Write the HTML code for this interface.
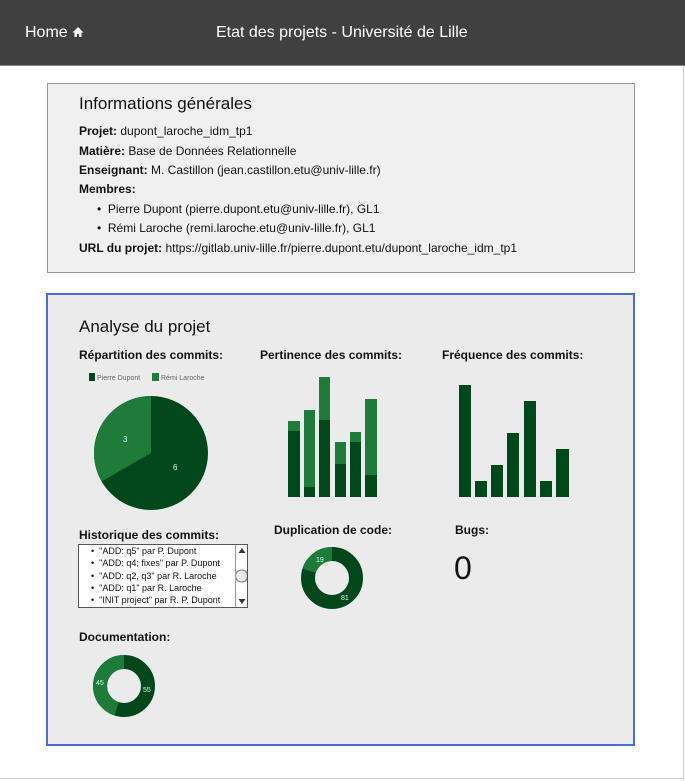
<!DOCTYPE html>
<html><head><meta charset="utf-8"><style>
*{margin:0;padding:0;box-sizing:border-box}
body{width:685px;height:781px;background:#fff;font-family:"Liberation Sans",Arial,sans-serif;position:relative;overflow:hidden;color:#111}
.a{position:absolute;white-space:nowrap}
.hdr{left:0;top:0;width:685px;height:66px;background:#404040;border-bottom:1px solid #888}
.t{font-size:12px}
b{font-weight:bold}
h4{font-size:12px;font-weight:bold;position:absolute;white-space:nowrap}
</style></head><body>
<div class="a" style="left:0;top:0;width:684px;height:779px;border-right:1px solid #ccc;border-bottom:1px solid #ccc"></div>
<div class="a hdr"></div>
<div class="a" style="left:25px;top:24px;color:#fff;font-size:16px">Home <svg width="12" height="12" viewBox="0 0 12 12" style="vertical-align:-1px"><path d="M6 1L0.5 6.5H2.5V11H5V8H7V11H9.5V6.5H11.5Z" fill="#fff"/></svg></div>
<div class="a" style="left:216px;top:24px;color:#fff;font-size:16px">Etat des projets - Université de Lille</div>

<div class="a" style="left:47px;top:83px;width:588px;height:190px;background:#f0f0f0;border:1px solid #999"></div>
<div class="a" style="left:79px;top:94px;font-size:17px">Informations générales</div>
<div class="a t" style="left:79px;top:124px"><b>Projet:</b> dupont_laroche_idm_tp1</div>
<div class="a t" style="left:79px;top:144px"><b>Matière:</b> Base de Données Relationnelle</div>
<div class="a t" style="left:79px;top:163px"><b>Enseignant:</b> M. Castillon (jean.castillon.etu@univ-lille.fr)</div>
<div class="a t" style="left:79px;top:182px"><b>Membres:</b></div>
<div class="a t" style="left:97px;top:202px">•&nbsp; Pierre Dupont (pierre.dupont.etu@univ-lille.fr), GL1</div>
<div class="a t" style="left:97px;top:221px">•&nbsp; Rémi Laroche (remi.laroche.etu@univ-lille.fr), GL1</div>
<div class="a t" style="left:79px;top:241px"><b>URL du projet:</b> https://gitlab.univ-lille.fr/pierre.dupont.etu/dupont_laroche_idm_tp1</div>

<div class="a" style="left:46px;top:293px;width:589px;height:453px;background:#ebebeb;border:2px solid #4a6fd4"></div>
<div class="a" style="left:79px;top:317px;font-size:17px">Analyse du projet</div>
<h4 style="left:79px;top:348px">Répartition des commits:</h4>
<h4 style="left:260px;top:348px">Pertinence des commits:</h4>
<h4 style="left:442px;top:348px">Fréquence des commits:</h4>
<h4 style="left:79px;top:528px">Historique des commits:</h4>
<h4 style="left:274px;top:523px">Duplication de code:</h4>
<h4 style="left:455px;top:523px">Bugs:</h4>
<h4 style="left:79px;top:630px">Documentation:</h4>
<div class="a" style="left:454px;top:550px;font-size:32px">0</div>

<svg class="a" style="left:0;top:0" width="685" height="781">
<g font-family="Liberation Sans,Arial,sans-serif" font-size="7" fill="#666">
<rect x="89" y="373" width="6" height="8" fill="#00481b"/><text x="97" y="380">Pierre Dupont</text>
<rect x="152" y="373" width="7" height="8" fill="#1e7b3a"/><text x="161" y="380">Rémi Laroche</text>
</g>
<circle cx="151" cy="453" r="57" fill="#00481b"/>
<path d="M151 453L151 396A57 57 0 0 0 101.6 481.5Z" fill="#1e7b3a"/>
<text x="123" y="442" font-size="8" fill="#cfe" font-family="Liberation Sans,Arial">3</text>
<text x="173" y="470" font-size="8" fill="#cfe" font-family="Liberation Sans,Arial">6</text>
<g fill="#1e7b3a">
<rect x="288" y="421" width="12" height="76"/><rect x="304" y="410" width="11" height="87"/><rect x="319" y="377" width="11" height="120"/><rect x="335" y="442" width="11" height="55"/><rect x="350" y="432" width="11" height="65"/><rect x="365" y="399" width="12" height="98"/>
</g>
<g fill="#00481b">
<rect x="288" y="431" width="12" height="66"/><rect x="304" y="487" width="11" height="10"/><rect x="319" y="420" width="11" height="77"/><rect x="335" y="464" width="11" height="33"/><rect x="350" y="442" width="11" height="55"/><rect x="365" y="475" width="12" height="22"/>
<rect x="459" y="385" width="12" height="112"/><rect x="475" y="481" width="12" height="16"/><rect x="491" y="465" width="12" height="32"/><rect x="507" y="433" width="12" height="64"/><rect x="524" y="401" width="12" height="96"/><rect x="540" y="481" width="12" height="16"/><rect x="556" y="449" width="13" height="48"/>
</g>
<circle cx="332" cy="578" r="24" fill="none" stroke="#00481b" stroke-width="14"/>
<path d="M332 554A24 24 0 0 0 309.2 570.6" fill="none" stroke="#1e7b3a" stroke-width="14"/>
<text x="316" y="562" font-size="7" fill="#cfe" font-family="Liberation Sans,Arial">19</text>
<text x="341" y="600" font-size="7" fill="#cfe" font-family="Liberation Sans,Arial">81</text>
<circle cx="124" cy="686" r="24" fill="none" stroke="#00481b" stroke-width="14"/>
<path d="M124 662A24 24 0 0 0 116.6 708.8" fill="none" stroke="#1e7b3a" stroke-width="14"/>
<text x="96" y="685" font-size="7" fill="#cfe" font-family="Liberation Sans,Arial">45</text>
<text x="143" y="692" font-size="7" fill="#cfe" font-family="Liberation Sans,Arial">55</text>
</svg>

<div class="a" style="left:78px;top:544px;width:170px;height:64px;background:#fff;border:1px solid #555;overflow:hidden">
<div style="position:absolute;left:12px;top:0;font-size:9px;line-height:12.3px">
<div>•&nbsp; "ADD: q5" par P. Dupont</div><div>•&nbsp; "ADD: q4; fixes" par P. Dupont</div><div>•&nbsp; "ADD: q2, q3" par R. Laroche</div><div>•&nbsp; "ADD: q1" par R. Laroche</div><div>•&nbsp; "INIT project" par R. P. Dupont</div></div>
<div style="position:absolute;right:0;top:0;width:12px;height:62px;border-left:1px solid #999;background:#fff">
<svg width="12" height="62"><path d="M2.5 8L6 3L9.5 8Z" fill="#333"/><circle cx="5.5" cy="31" r="6" fill="#e8e8e8" stroke="#777"/><path d="M2.5 54L6 59L9.5 54Z" fill="#333"/></svg></div>
</div>
</body></html>
